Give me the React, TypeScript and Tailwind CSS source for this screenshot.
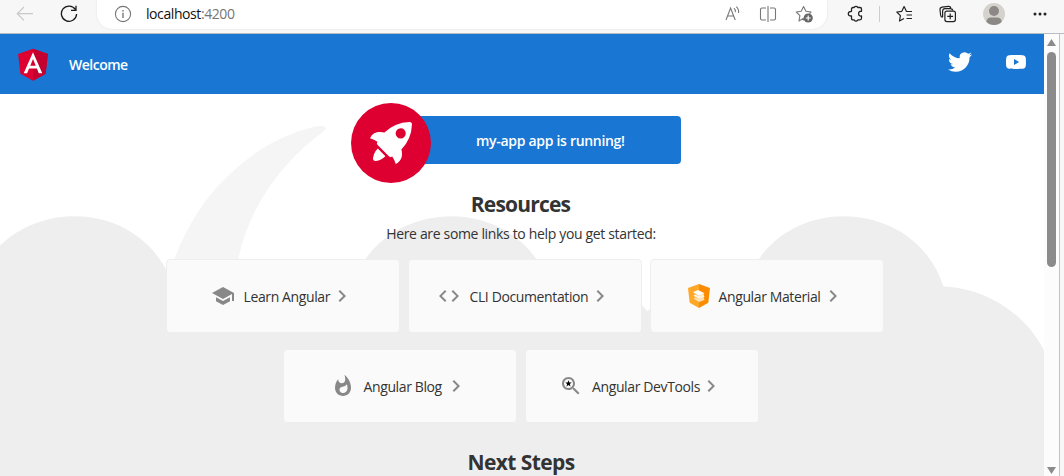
import type { ReactNode } from 'react';

const CLOUDS =
  'M2379.709,863.793c10-93-77-171-168-149-52-114-225-105-264,15-75,3-140,59-152,133-30,2.83-66.72,9.83-93.5,26.25-26.78-16.42-63.5-23.42-93.5-26.25-12-74-77-130-152-133-39-120-212-129-264-15-54.084-13.075-106.753,9.173-138.488,48.9-31.734-39.726-84.4-61.974-138.487-48.9-52-114-225-105-264,15a162.027,162.027,0,0,0-103.147,43.044c-30.633-45.365-87.1-72.091-145.206-58.044-52-114-225-105-264,15-75,3-140,59-152,133V1400H2379.709Z';

function Chevron() {
  return (
    <svg className="size-6 shrink-0 fill-[#888]" viewBox="0 0 24 24">
      <path d="M10 6L8.59 7.41 13.17 12l-4.58 4.59L10 18l6-6z" />
    </svg>
  );
}

function Card({ icon, label, text }: { icon: ReactNode; label: string; text: string }) {
  return (
    <a className="flex h-[74px] w-[234px] shrink-0 items-center justify-center rounded border border-[#eee] bg-[#fafafa] pr-[2px] text-[#333]">
      {icon}
      <span className={`ml-[9px] whitespace-nowrap pt-px text-sm tracking-[-0.38px] ${text}`}>{label}</span>
      <Chevron />
    </a>
  );
}

function BrowserBar() {
  return (
    <div className="flex h-[34px] shrink-0 items-start border-b border-[#b9bcc0] bg-[#f7f7f7]">
      <svg className="mt-[5px] ml-4 size-[18px] shrink-0" viewBox="0 0 18 18" fill="none" stroke="#c8c8c8" strokeWidth="1.2">
        <path d="M17 8.7H1.5M8 2L1.3 8.7L8 15.4" />
      </svg>
      <svg className="mt-[5px] ml-[26px] size-[18px] shrink-0" viewBox="0 0 18 18" fill="none" stroke="#1b1b1b" strokeWidth="1.3">
        <path d="M15.3 4.4A7.6 7.6 0 1 0 16.6 9M16 .8V5.3H11" />
      </svg>
      <div className="ml-[19px] flex h-[29px] w-[730px] shrink-0 items-start rounded-b-[15px] bg-white shadow-[0_0_3px_rgba(0,0,0,0.08)]">
        <svg className="mt-[5px] ml-[17px] size-[18px] shrink-0" viewBox="0 0 18 18" fill="none" stroke="#777" strokeWidth="1.1">
          <circle cx="9" cy="9" r="7.6" />
          <path d="M9 7.8V13M9 5V6.5" strokeWidth="1.4" />
        </svg>
        <span className="mt-[4px] ml-[14px] w-[560px] text-[14px] leading-5 tracking-[-0.42px] whitespace-nowrap text-[#111]">
          localhost<span className="text-[#767676]">:4200</span>
        </span>
        <svg className="mt-[5px] ml-[18px] size-[18px] shrink-0" viewBox="0 0 18 18" fill="none" stroke="#777" strokeWidth="1.1">
          <path d="M2 15L6.6 3L11.2 15M3.5 11H9.7M10 3.2Q11.8 5 11.4 7.2M12.3 1.6Q15.2 4.3 14.5 8" />
        </svg>
        <svg className="mt-[5px] ml-[17px] size-[18px] shrink-0" viewBox="0 0 18 18" fill="none" stroke="#777" strokeWidth="1.1">
          <path d="M7 3H3Q1.5 3 1.5 4.5V13.5Q1.5 15 3 15H7M11 3H15Q16.500 3 16.500 4.500V13.500Q16.500 15 15 15H11M9 1V17" />
        </svg>
        <svg className="mt-[5px] ml-[18px] size-[19px] shrink-0" viewBox="0 0 19 19">
          <path d="M9 15.500L8.300 13.400L4 16L4.900 10.700L1.300 7L6.200 6.300L8.600 1.600L10.900 6.300L16 7L14.500 8.600" fill="none" stroke="#777" strokeWidth="1.1" strokeLinejoin="round" />
          <circle cx="13.200" cy="13" r="4.600" fill="#666" />
          <path d="M13.200 10.500V15.500M10.700 13H15.700" stroke="#fff" strokeWidth="1.200" />
        </svg>
      </div>
      <svg className="mt-[5px] ml-5 size-[18px] shrink-0" viewBox="0 0 18 18" fill="none" stroke="#222" strokeWidth="1.3" strokeLinejoin="round">
        <path d="M6 2.500H7Q9 .2 11 2.500H13Q14.500 2.500 14.500 4V6.300Q11.600 6 11.600 8.700Q11.600 11.300 14.500 11V13.300Q14.500 14.800 13 14.800H11Q9 17.500 7 14.800H6Q4.500 14.800 4.500 13.300V11Q1.300 11 1.300 8.700Q1.300 6.400 4.500 6.300V4Q4.500 2.500 6 2.500Z" />
      </svg>
      <div className="mt-1.5 ml-[14px] h-4 w-px shrink-0 bg-[#cdcdcd]" />
      <svg className="mt-[5px] ml-4 size-[18px] shrink-0" viewBox="0 0 18 18" fill="none" stroke="#222" strokeWidth="1.2" strokeLinejoin="round">
        <path d="M16 6.500H10.500L8.100 1.600L5.800 6.300L.8 7L4.400 10.700L3.500 16L8 13.500M10.500 10H16M10.500 13.500H16" />
      </svg>
      <svg className="mt-[5px] ml-[25px] size-[18px] shrink-0" viewBox="0 0 18 18" fill="none" stroke="#222" strokeWidth="1.2">
        <rect x="5.900" y="6.100" width="10.500" height="10.500" rx="2" />
        <path d="M11.200 8.500V14.300M8.300 11.400H14.100M3.600 12.500Q1.800 12 1.600 10L1 4.800Q.9 2.600 3 2.200L9.500 1.300Q11.500 1.200 12 3.300M3.600 12V6Q3.800 3.800 6 3.700H11.500Q13.300 3.800 13.900 5.500" />
      </svg>
      <svg className="mt-[3px] ml-[26px] size-[22px] shrink-0" viewBox="0 0 22 22">
        <circle cx="11" cy="11" r="11" fill="#d5d2ce" />
        <circle cx="11" cy="8" r="5" fill="#8b8885" />
        <path d="M3.300 18.700Q4 14.500 8 14.500H14Q18 14.500 18.700 18.700Q15.500 22 11 22T3.300 18.700Z" fill="#8b8885" />
      </svg>
      <svg className="mt-[5px] ml-[27px] size-[18px] shrink-0" viewBox="0 0 18 18" fill="#222">
        <circle cx="3" cy="9" r="1.500" />
        <circle cx="8" cy="9" r="1.500" />
        <circle cx="13" cy="9" r="1.500" />
      </svg>
    </div>
  );
}

function Toolbar() {
  return (
    <header className="flex h-[60px] shrink-0 items-center bg-[#1976d2] text-white">
      <svg className="ml-[13px] size-10 shrink-0" viewBox="0 0 250 250">
        <path fill="#dd0031" d="M125 30L31.900 63.200L46.100 186.300L125 230L203.900 186.300L218.100 63.200Z" />
        <path fill="#c3002f" d="M125 30V230L203.900 186.300L218.100 63.200Z" />
        <path fill="#fff" d="M125 52.100L66.800 182.600H88.500L100.200 153.400H149.600L161.300 182.600H183ZM142 135.400H108L125 94.500Z" />
      </svg>
      <span className="ml-4 grow pt-[2px] text-sm font-semibold tracking-[-0.5px]">Welcome</span>
      <svg className="mb-1 size-6 fill-white" viewBox="0 0 24 24">
        <path d="M23.953 4.57a10 10 0 01-2.825.775 4.958 4.958 0 002.163-2.723c-.951.555-2.005.959-3.127 1.184a4.92 4.92 0 00-8.384 4.482C7.69 8.095 4.067 6.13 1.64 3.162a4.822 4.822 0 00-.666 2.475c0 1.71.87 3.213 2.188 4.096a4.904 4.904 0 01-2.228-.616v.06a4.923 4.923 0 003.946 4.827 4.996 4.996 0 01-2.212.085 4.936 4.936 0 004.604 3.417 9.867 9.867 0 01-6.102 2.105c-.39 0-.779-.023-1.17-.067a13.995 13.995 0 007.557 2.209c9.053 0 13.998-7.496 13.998-13.985 0-.21 0-.42-.015-.63A9.935 9.935 0 0024 4.59z" />
      </svg>
      <svg className="mr-4 mb-1 ml-8 size-6 fill-white" viewBox="0 0 24 24">
        <path d="M21.58 7.19c-.23-.86-.91-1.54-1.77-1.77C18.25 5 12 5 12 5s-6.25 0-7.81.42c-.86.23-1.54.91-1.77 1.77C2 8.75 2 12 2 12s0 3.25.42 4.81c.23.86.91 1.54 1.77 1.77C5.75 19 12 19 12 19s6.25 0 7.81-.42c.86-.23 1.54-.91 1.77-1.77C22 15.25 22 12 22 12s0-3.25-.42-4.81zM10 15V9l5.2 3-5.2 3z" />
      </svg>
    </header>
  );
}

function Background() {
  return (
    <svg className="absolute inset-0 h-[382px] w-[1044px]" viewBox="0 94 1044 382">
      <path fill="#f5f5f5" d="M164 290C182 227 208 195 226 178C246 158 274 136 316 126.500C325 124.500 328 128 324 131C286 159 250 202 238 260L234 290Z" />
      <g transform="translate(-232.500 216.300) scale(.73533)">
        <path fill="#eee" transform="translate(142.69 -634.312)" d={CLOUDS} />
      </g>
    </svg>
  );
}

function Banner() {
  return (
    <div className="mt-[9px] ml-[351px] flex w-[330px] items-center">
      <svg className="relative z-10 size-20 shrink-0" viewBox="0 0 101.678 101.678">
        <circle cx="50.839" cy="50.839" r="50.839" fill="#dd0031" />
        <g transform="translate(24.185 24.185)" fill="#fff">
          <path transform="translate(.371 3.363)" d="M3.4,42.615a3.084,3.084,0,0,0,3.553,3.553,21.419,21.419,0,0,0,12.215-6.107L9.511,30.4A21.419,21.419,0,0,0,3.4,42.615Z" />
          <path d="M53.3,3.221A3.09,3.09,0,0,0,50.081,0,48.227,48.227,0,0,0,18.322,13.437c-6-1.666-14.991-1.221-18.322,7.218A33.892,33.892,0,0,1,9.439,25.1l-.333.666a3.013,3.013,0,0,0,.555,3.553L23.985,43.641a2.9,2.9,0,0,0,3.553.555l.666-.333A33.892,33.892,0,0,1,32.647,53.3c8.55-3.664,8.884-12.326,7.218-18.322A48.227,48.227,0,0,0,53.3,3.221ZM34.424,9.772a6.439,6.439,0,1,1,9.106,9.106,6.368,6.368,0,0,1-9.106,0A6.467,6.467,0,0,1,34.424,9.772Z" />
        </g>
      </svg>
      <div className="-ml-5 mb-[6px] flex h-12 grow items-center rounded bg-[#1976d2] pt-px pl-[65px] text-sm font-semibold tracking-[-0.3px] whitespace-nowrap text-white">
        my-app app is running!
      </div>
    </div>
  );
}

function Scrollbar() {
  return (
    <div className="flex w-[15px] shrink-0 flex-col items-center bg-[#fcfcfc]">
      <svg className="mt-[5px] h-[7px] w-[9px] shrink-0 fill-[#8b8b8b]" viewBox="0 0 9 7">
        <path d="M4.500 0L9 7H0Z" />
      </svg>
      <div className="mt-[6px] h-[215px] w-[9px] shrink-0 rounded-full bg-[#8b8b8b]" />
      <div className="grow" />
      <svg className="mb-[2px] h-[7px] w-[9px] shrink-0 fill-[#8b8b8b]" viewBox="0 0 9 7">
        <path d="M0 0H9L4.500 7Z" />
      </svg>
    </div>
  );
}

export default function App() {
  return (
    <div className="flex h-[476px] w-[1064px] flex-col overflow-hidden bg-white font-['Open_Sans','Noto_Sans',sans-serif] text-[#333]">
      <BrowserBar />
      <div className="flex min-h-0 grow">
        <div className="flex w-[1044px] shrink-0 flex-col">
          <Toolbar />
          <main className="relative min-h-0 grow overflow-hidden">
            <Background />
            <div className="relative flex flex-col">
              <Banner />
              <h2 className="mt-[5px] w-[1041px] text-center text-[21px] leading-8 font-bold tracking-[-0.8px]">Resources</h2>
              <p className="mt-[4px] w-[1042px] text-center text-sm leading-5 tracking-[-0.34px]">Here are some links to help you get started:</p>
              <div className="mt-[15px] ml-[166px] flex gap-2">
                <Card
                  label="Learn Angular"
                  text="w-[86px]"
                  icon={
                    <svg className="size-6 shrink-0 fill-[#888]" viewBox="0 0 24 24">
                      <path d="M5 13.18v4L12 21l7-3.82v-4L12 17l-7-3.82zM12 3L1 9l11 6 9-4.91V17h2V9L12 3z" />
                    </svg>
                  }
                />
                <Card
                  label="CLI Documentation"
                  text="w-[118px]"
                  icon={
                    <svg className="size-6 shrink-0 fill-[#888]" viewBox="0 0 24 24">
                      <path d="M9.4 16.6L4.8 12l4.6-4.6L8 6l-6 6 6 6 1.4-1.4zm5.2 0l4.6-4.6-4.6-4.6L16 6l6 6-6 6-1.4-1.4z" />
                    </svg>
                  }
                />
                <Card
                  label="Angular Material"
                  text="w-[102px]"
                  icon={
                    <svg className="h-[24px] w-[22px] shrink-0" viewBox="0 0 22 24">
                      <path fill="#ffa726" d="M11 0L0 4L1.700 18.800L11 24Z" />
                      <path fill="#fb8c00" d="M11 0L22 4L20.300 18.800L11 24Z" />
                      <path fill="#ffe0b2" d="M5.500 14.500L7 13.500L11 15L15.500 13L16.500 16L11 18Z" />
                      <path fill="#fff3e0" d="M5.500 11.700L7 10.500L11 12L15.500 10L16.500 13L11 15Z" />
                      <path fill="#fff" d="M5 8.200L10 6L16.500 9.200L11 12Z" />
                    </svg>
                  }
                />
              </div>
              <div className="mt-4 ml-[283px] flex gap-2">
                <Card
                  label="Angular Blog"
                  text="w-[80px]"
                  icon={
                    <svg className="size-6 shrink-0 fill-[#888]" viewBox="0 0 24 24">
                      <path d="M13.5.67s.74 2.65.74 4.8c0 2.06-1.35 3.73-3.41 3.73-2.07 0-3.63-1.67-3.63-3.73l.03-.36C5.21 7.51 4 10.62 4 14c0 4.42 3.58 8 8 8s8-3.58 8-8C20 8.61 17.41 3.8 13.5.67zM11.71 19c-1.78 0-3.22-1.4-3.22-3.14 0-1.62 1.05-2.76 2.81-3.12 1.77-.36 3.6-1.21 4.62-2.58.39 1.29.59 2.65.59 4.04 0 2.65-2.15 4.8-4.8 4.8z" />
                    </svg>
                  }
                />
                <Card
                  label="Angular DevTools"
                  text="w-[107px]"
                  icon={
                    <svg className="size-6 shrink-0" viewBox="0 0 24 24">
                      <path fill="#888" d="M15.500 14h-.79l-.28-.27C15.410 12.590 16 11.110 16 9.500 16 5.910 13.090 3 9.500 3S3 5.910 3 9.500 5.910 16 9.500 16c1.610 0 3.090-.59 4.230-1.570l.27.28v.79l5 4.990L20.490 19l-4.990-5zm-6 0C7.010 14 5 11.990 5 9.500S7.010 5 9.500 5 14 7.010 14 9.500 11.990 14 9.500 14z" />
                      <path d="M9.500 6.200L10.400 8.500L12.700 8.600L10.900 10.100L11.500 12.400L9.500 11.100L7.500 12.400L8.100 10.100L6.300 8.600L8.600 8.500Z" />
                    </svg>
                  }
                />
              </div>
              <h2 className="mt-[23px] w-[1042px] text-center text-[21px] leading-8 font-bold tracking-[-0.6px]">Next Steps</h2>
            </div>
          </main>
        </div>
        <Scrollbar />
        <div className="w-[5px] shrink-0 border-l border-[#c2c2c2] bg-[#f7f7f7]" />
      </div>
    </div>
  );
}
